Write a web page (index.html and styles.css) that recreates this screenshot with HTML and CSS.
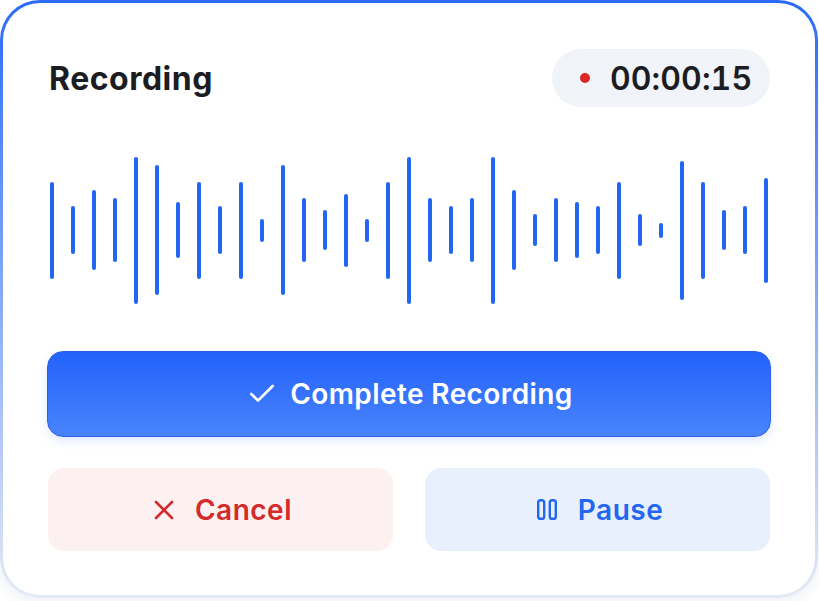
FILE: index.html
```html
<!DOCTYPE html>
<html lang="en">
<head>
<meta charset="utf-8">
<title>Recording</title>
<link rel="stylesheet" href="styles.css">
</head>
<body>
<div class="card">
  <div class="header">
    <h1 class="title">Recording</h1>
    <div class="timer"><span class="dot"></span><span class="time">00:00:15</span></div>
  </div>
  <div class="wave">
    <span class="bar" style="height:97px"></span>
    <span class="bar" style="height:48px"></span>
    <span class="bar" style="height:80px"></span>
    <span class="bar" style="height:64px"></span>
    <span class="bar" style="height:147px"></span>
    <span class="bar" style="height:130px"></span>
    <span class="bar" style="height:56px"></span>
    <span class="bar" style="height:97px"></span>
    <span class="bar" style="height:48px"></span>
    <span class="bar" style="height:97px"></span>
    <span class="bar" style="height:23px"></span>
    <span class="bar" style="height:130px"></span>
    <span class="bar" style="height:64px"></span>
    <span class="bar" style="height:40px"></span>
    <span class="bar" style="height:73px"></span>
    <span class="bar" style="height:23px"></span>
    <span class="bar" style="height:97px"></span>
    <span class="bar" style="height:147px"></span>
    <span class="bar" style="height:64px"></span>
    <span class="bar" style="height:48px"></span>
    <span class="bar" style="height:64px"></span>
    <span class="bar" style="height:147px"></span>
    <span class="bar" style="height:80px"></span>
    <span class="bar" style="height:32px"></span>
    <span class="bar" style="height:64px"></span>
    <span class="bar" style="height:56px"></span>
    <span class="bar" style="height:48px"></span>
    <span class="bar" style="height:97px"></span>
    <span class="bar" style="height:32px"></span>
    <span class="bar" style="height:15px"></span>
    <span class="bar" style="height:139px"></span>
    <span class="bar" style="height:97px"></span>
    <span class="bar" style="height:40px"></span>
    <span class="bar" style="height:48px"></span>
    <span class="bar" style="height:105px"></span>
  </div>
  <button class="btn-primary">
    <svg class="icon-check" width="32" height="32" viewBox="0 0 24 24" fill="none" stroke="currentColor" stroke-width="2" stroke-linecap="round" stroke-linejoin="round"><path d="M20 6 9 17l-5-5"/></svg>
    <span>Complete Recording</span>
  </button>
  <div class="actions">
    <button class="btn btn-cancel">
      <svg width="20" height="20" viewBox="0 0 20 20" fill="none" stroke="currentColor" stroke-width="2.6" stroke-linecap="round"><path d="M2 2 18 18M18 2 2 18"/></svg>
      <span>Cancel</span>
    </button>
    <button class="btn btn-pause">
      <svg width="20" height="21" viewBox="0 0 20 21" fill="none" stroke="currentColor" stroke-width="2.4"><rect x="1.2" y="1.2" width="6" height="18.6" rx="2.4"/><rect x="12.8" y="1.2" width="6" height="18.6" rx="2.4"/></svg>
      <span>Pause</span>
    </button>
  </div>
</div>
</body>
</html>
```

FILE: styles.css
```css
* { box-sizing: border-box; }

html, body {
  margin: 0;
  padding: 0;
  background: #ffffff;
}

body {
  font-family: Inter, "Noto Sans", "Liberation Sans", sans-serif;
  width: 819px;
  height: 601px;
  overflow: hidden;
}

.card {
  width: 818px;
  height: 598px;
  border: 3px solid transparent;
  border-radius: 40px;
  background:
    linear-gradient(#ffffff, #ffffff) padding-box,
    linear-gradient(180deg, #2b6af7 0%, #e4eaf5 100%) border-box;
  padding: 46px 45px 44px;
  display: flex;
  flex-direction: column;
  box-shadow: 0 4px 14px rgba(40, 70, 130, 0.08);
}

.header {
  height: 58px;
  display: flex;
  align-items: center;
  justify-content: space-between;
  margin-bottom: 49px;
}

.title {
  margin: 0 0 0 1px;
  font-size: 32px;
  font-weight: 700;
  color: #1c1d22;
  letter-spacing: 0.5px;
}

.timer {
  height: 58px;
  width: 218px;
  border-radius: 29px;
  background: #f0f3f7;
  display: flex;
  align-items: center;
  padding: 0 18px 0 28px;
  gap: 20px;
}

.dot {
  width: 10px;
  height: 10px;
  border-radius: 50%;
  background: #dc2626;
  flex: none;
}

.time {
  font-size: 32px;
  font-weight: 600;
  color: #1c1d22;
  font-variant-numeric: tabular-nums;
  letter-spacing: 0.1px;
}

.wave {
  height: 148px;
  display: flex;
  align-items: center;
  justify-content: space-between;
  padding: 0 2px;
  margin-bottom: 47px;
}

.bar {
  width: 4px;
  border-radius: 2px;
  background: #2366f0;
  flex: none;
}

.btn-primary {
  height: 86px;
  margin: 0 -1px 31px;
  border: 1px solid #2d5fe8;
  border-radius: 16px;
  background: linear-gradient(180deg, #2362fb 0%, #4884fc 100%);
  box-shadow: 0 4px 10px rgba(37, 99, 235, 0.14);
  color: #ffffff;
  font-family: inherit;
  font-size: 28px;
  font-weight: 600;
  letter-spacing: 0.4px;
  display: flex;
  align-items: center;
  justify-content: center;
  gap: 12px;
  padding: 0 0 0 5px;
}

.icon-check { margin-left: -4px; }

.actions {
  height: 83px;
  display: flex;
  gap: 32px;
}

.btn {
  flex: 1;
  border: none;
  border-radius: 16px;
  font-family: inherit;
  font-size: 28px;
  font-weight: 600;
  letter-spacing: 0.5px;
  display: flex;
  align-items: center;
  justify-content: center;
  gap: 21px;
  padding: 0 0 0 5px;
}

.btn-cancel {
  background: #fdf0f0;
  color: #d42a2a;
}

.btn-pause {
  background: #e9f0fd;
  color: #2366f0;
}
```
